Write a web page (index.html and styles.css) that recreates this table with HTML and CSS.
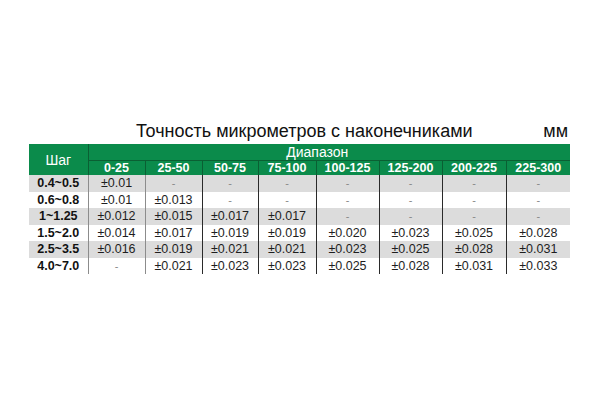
FILE: index.html
```html
<!DOCTYPE html>
<html>
<head>
<meta charset="utf-8">
<link rel="stylesheet" href="styles.css">
</head>
<body>
<div class="wrap">
  <div class="titlebar">
    <span class="title">Точность микрометров с наконечниками</span>
    <span class="unit">мм</span>
  </div>
  <table class="spec">
    <colgroup>
      <col class="c0"><col class="c1"><col class="c1"><col class="c2"><col class="c3">
      <col class="c4"><col class="c4"><col class="c5"><col class="c5">
    </colgroup>
    <thead>
      <tr class="h1">
        <th rowspan="2" class="step">Шаг</th>
        <th colspan="8" class="range"><span>Диапазон</span></th>
      </tr>
      <tr class="h2">
        <th>0-25</th><th>25-50</th><th>50-75</th><th>75-100</th><th>100-125</th><th>125-200</th><th>200-225</th><th>225-300</th>
      </tr>
    </thead>
    <tbody>
      <tr class="g r17"><th>0.4~0.5</th><td>±0.01</td><td class="d">-</td><td class="d">-</td><td class="d">-</td><td class="d">-</td><td class="d">-</td><td class="d">-</td><td class="d">-</td></tr>
      <tr class="r16"><th>0.6~0.8</th><td>±0.01</td><td>±0.013</td><td class="d">-</td><td class="d">-</td><td class="d">-</td><td class="d">-</td><td class="d">-</td><td class="d">-</td></tr>
      <tr class="g r17"><th>1~1.25</th><td>±0.012</td><td>±0.015</td><td>±0.017</td><td>±0.017</td><td class="d">-</td><td class="d">-</td><td class="d">-</td><td class="d">-</td></tr>
      <tr class="r16"><th>1.5~2.0</th><td>±0.014</td><td>±0.017</td><td>±0.019</td><td>±0.019</td><td>±0.020</td><td>±0.023</td><td>±0.025</td><td>±0.028</td></tr>
      <tr class="g r17"><th>2.5~3.5</th><td>±0.016</td><td>±0.019</td><td>±0.021</td><td>±0.021</td><td>±0.023</td><td>±0.025</td><td>±0.028</td><td>±0.031</td></tr>
      <tr class="r16"><th>4.0~7.0</th><td class="d">-</td><td>±0.021</td><td>±0.023</td><td>±0.023</td><td>±0.025</td><td>±0.028</td><td>±0.031</td><td>±0.033</td></tr>
    </tbody>
  </table>
</div>
</body>
</html>
```

FILE: styles.css
```css
html, body {
  margin: 0;
  padding: 0;
  background: #ffffff;
}
body {
  font-family: "Liberation Sans", Arial, sans-serif;
  color: #1a1a1a;
}
.wrap {
  width: 541px;
  margin-left: 29px;
  padding-top: 120px;
}
.titlebar {
  display: flex;
  height: 24px;
  font-size: 18px;
  line-height: 22px;
  color: #111;
}
.title {
  margin-left: 107px;
}
.unit {
  margin-left: auto;
  margin-right: 2px;
}
.spec {
  width: 541px;
  border-collapse: collapse;
  table-layout: fixed;
  font-size: 12.5px;
}
.c0 { width: 59px; }
.c1 { width: 57px; }
.c2 { width: 56px; }
.c3 { width: 58px; }
.c4 { width: 63px; }
.c5 { width: 64px; }
.spec th, .spec td {
  padding: 0;
  text-align: center;
  white-space: nowrap;
  overflow: hidden;
}
thead th {
  background: #0b8b4b;
  color: #ffffff;
}
.h1 th { height: 16px; }
.h1 .step {
  font-weight: normal;
  font-size: 14px;
  border-right: 1px solid #0a5f33;
}
.h1 .range {
  font-weight: normal;
  font-size: 14px;
  line-height: 16px;
  border-bottom: 1px solid #0a5f33;
}
.range span {
  position: relative;
  left: -12px;
}
.h2 th {
  height: 14px;
  line-height: 14px;
  font-weight: bold;
  border-left: 1px solid #0a5f33;
}
tbody th {
  font-weight: bold;
  font-size: 12.5px;
  color: #111;
  border-right: 1px solid #8c8c8c;
}
tbody td {
  color: #1e1e1e;
  border-left: 1px solid #2a2a2a;
}
tbody td:nth-child(2) { border-left-color: #8c8c8c; }
tbody td:nth-child(3) { border-left-color: #8c8c8c; }
.r17 th, .r17 td { height: 17px; line-height: 17px; }
.r16 th, .r16 td { height: 16px; line-height: 16px; }
.g th, .g td { background: #dcdcdc; }
.d { color: #888; font-size: 11px; }
```
